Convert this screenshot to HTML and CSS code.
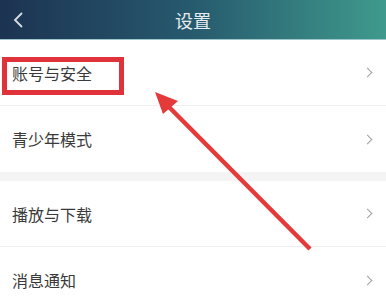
FILE: index.html
```html
<!DOCTYPE html>
<html lang="zh-CN">
<head>
  <meta charset="UTF-8">
  <title>设置</title>
  <link rel="stylesheet" href="styles.css">
</head>
<body>

  <header class="topbar">
    <svg class="back" width="12" height="18" viewBox="0 0 12 18">
      <path d="M10 2 L3 9 L10 16" fill="none" stroke="#d8dde3" stroke-width="1.8"/>
    </svg>
    <h1>设置</h1>
  </header>

  <div class="group">
    <div class="row"><span>账号与安全</span><span class="chev"></span></div>
    <div class="row"><span>青少年模式</span><span class="chev"></span></div>
  </div>

  <div class="group">
    <div class="row"><span>播放与下载</span><span class="chev"></span></div>
    <div class="row"><span>消息通知</span><span class="chev"></span></div>
  </div>

  <!-- annotation -->
  <div class="mark-box"></div>
  <svg class="mark-arrow" width="386" height="301" viewBox="0 0 386 301">
    <line x1="310" y1="249" x2="168" y2="106" stroke="#e53a3a" stroke-width="4.5"/>
    <polygon points="155,92 178,101 163,114" fill="#e53a3a"/>
  </svg>

</body>
</html>
```

FILE: styles.css
```css
html, body {
  height: 301px;
  overflow: hidden;
}

body {
  margin: 0;
  padding: 0;
  background-color: #f4f4f4;
  font-family: "Noto Sans CJK SC", "Noto Sans", sans-serif;
  color: #3a3a3a;
  position: relative;
}

.topbar {
  height: 40px;
  background: linear-gradient(to right, #1c3352, #275a6e 50%, #3f9a8d);
  display: flex;
  align-items: center;
  justify-content: center;
  position: relative;
  border-bottom: 1px solid #9ec7cc;
  box-sizing: border-box;
}

.topbar h1 {
  margin: 0;
  font-size: 18px;
  font-weight: normal;
  color: #e6ecef;
}

.back {
  position: absolute;
  left: 12px;
  top: 11px;
}

.group {
  background-color: #fff;
  margin-bottom: 9px;
}

.row {
  height: 66px;
  display: flex;
  align-items: center;
  justify-content: space-between;
  padding: 0 12px;
  font-size: 16px;
  border-bottom: 1px solid #f0f0f0;
  box-sizing: border-box;
}

.row:last-child {
  border-bottom: none;
}

.chev {
  width: 6px;
  height: 6px;
  border-top: 1.4px solid #a0a0a0;
  border-right: 1.4px solid #a0a0a0;
  transform: rotate(45deg);
  margin-right: 3px;
}

.mark-box {
  position: absolute;
  left: 2px;
  top: 57px;
  width: 112px;
  height: 28px;
  border: 5px solid #e0323a;
}

.mark-arrow {
  position: absolute;
  left: 0;
  top: 0;
}
```
